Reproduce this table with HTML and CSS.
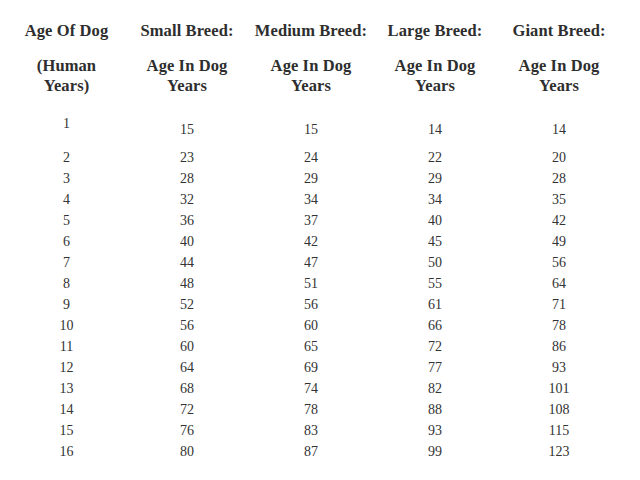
FILE: index.html
```html
<!DOCTYPE html>
<html>
<head>
<meta charset="utf-8">
<link rel="stylesheet" href="styles.css">
</head>
<body>
<table class="ages">
  <tr class="head1">
    <th class="c1">Age Of Dog</th>
    <th>Small Breed:</th>
    <th>Medium Breed:</th>
    <th>Large Breed:</th>
    <th>Giant Breed:</th>
  </tr>
  <tr class="head2">
    <th class="c1">(Human<br>Years)</th>
    <th>Age In Dog<br>Years</th>
    <th>Age In Dog<br>Years</th>
    <th>Age In Dog<br>Years</th>
    <th>Age In Dog<br>Years</th>
  </tr>
  <tr class="first">
    <td class="c1">1</td><td>15</td><td>15</td><td>14</td><td>14</td>
  </tr>
  <tr><td class="c1">2</td><td>23</td><td>24</td><td>22</td><td>20</td></tr>
  <tr><td class="c1">3</td><td>28</td><td>29</td><td>29</td><td>28</td></tr>
  <tr><td class="c1">4</td><td>32</td><td>34</td><td>34</td><td>35</td></tr>
  <tr><td class="c1">5</td><td>36</td><td>37</td><td>40</td><td>42</td></tr>
  <tr><td class="c1">6</td><td>40</td><td>42</td><td>45</td><td>49</td></tr>
  <tr><td class="c1">7</td><td>44</td><td>47</td><td>50</td><td>56</td></tr>
  <tr><td class="c1">8</td><td>48</td><td>51</td><td>55</td><td>64</td></tr>
  <tr><td class="c1">9</td><td>52</td><td>56</td><td>61</td><td>71</td></tr>
  <tr><td class="c1">10</td><td>56</td><td>60</td><td>66</td><td>78</td></tr>
  <tr><td class="c1">11</td><td>60</td><td>65</td><td>72</td><td>86</td></tr>
  <tr><td class="c1">12</td><td>64</td><td>69</td><td>77</td><td>93</td></tr>
  <tr><td class="c1">13</td><td>68</td><td>74</td><td>82</td><td>101</td></tr>
  <tr><td class="c1">14</td><td>72</td><td>78</td><td>88</td><td>108</td></tr>
  <tr><td class="c1">15</td><td>76</td><td>83</td><td>93</td><td>115</td></tr>
  <tr><td class="c1">16</td><td>80</td><td>87</td><td>99</td><td>123</td></tr>
</table>
</body>
</html>
```
FILE: styles.css
```css
html, body {
  background: #ffffff;
}
body {
  margin: 8px;
  font-family: "Liberation Serif", "DejaVu Serif", serif;
  color: #333333;
}
.ages {
  border-collapse: collapse;
  table-layout: fixed;
  width: 613px;
}
.ages th, .ages td {
  padding: 0;
  text-align: center;
  vertical-align: middle;
  width: 124px;
}
.ages .c1 {
  width: 117px;
}
.ages th {
  font-size: 16.5px;
  font-weight: bold;
  line-height: 20px;
  letter-spacing: 0.1px;
  color: #2e2e2e;
}
.head1 {
  height: 45px;
}
.head2 {
  height: 46px;
}
.ages td {
  font-size: 14px;
  line-height: 21px;
  height: 21px;
  font-variant-numeric: oldstyle-nums;
}
.first td {
  height: 36px;
  padding-top: 12px;
}
.first td.c1 {
  padding-top: 0;
}
```
